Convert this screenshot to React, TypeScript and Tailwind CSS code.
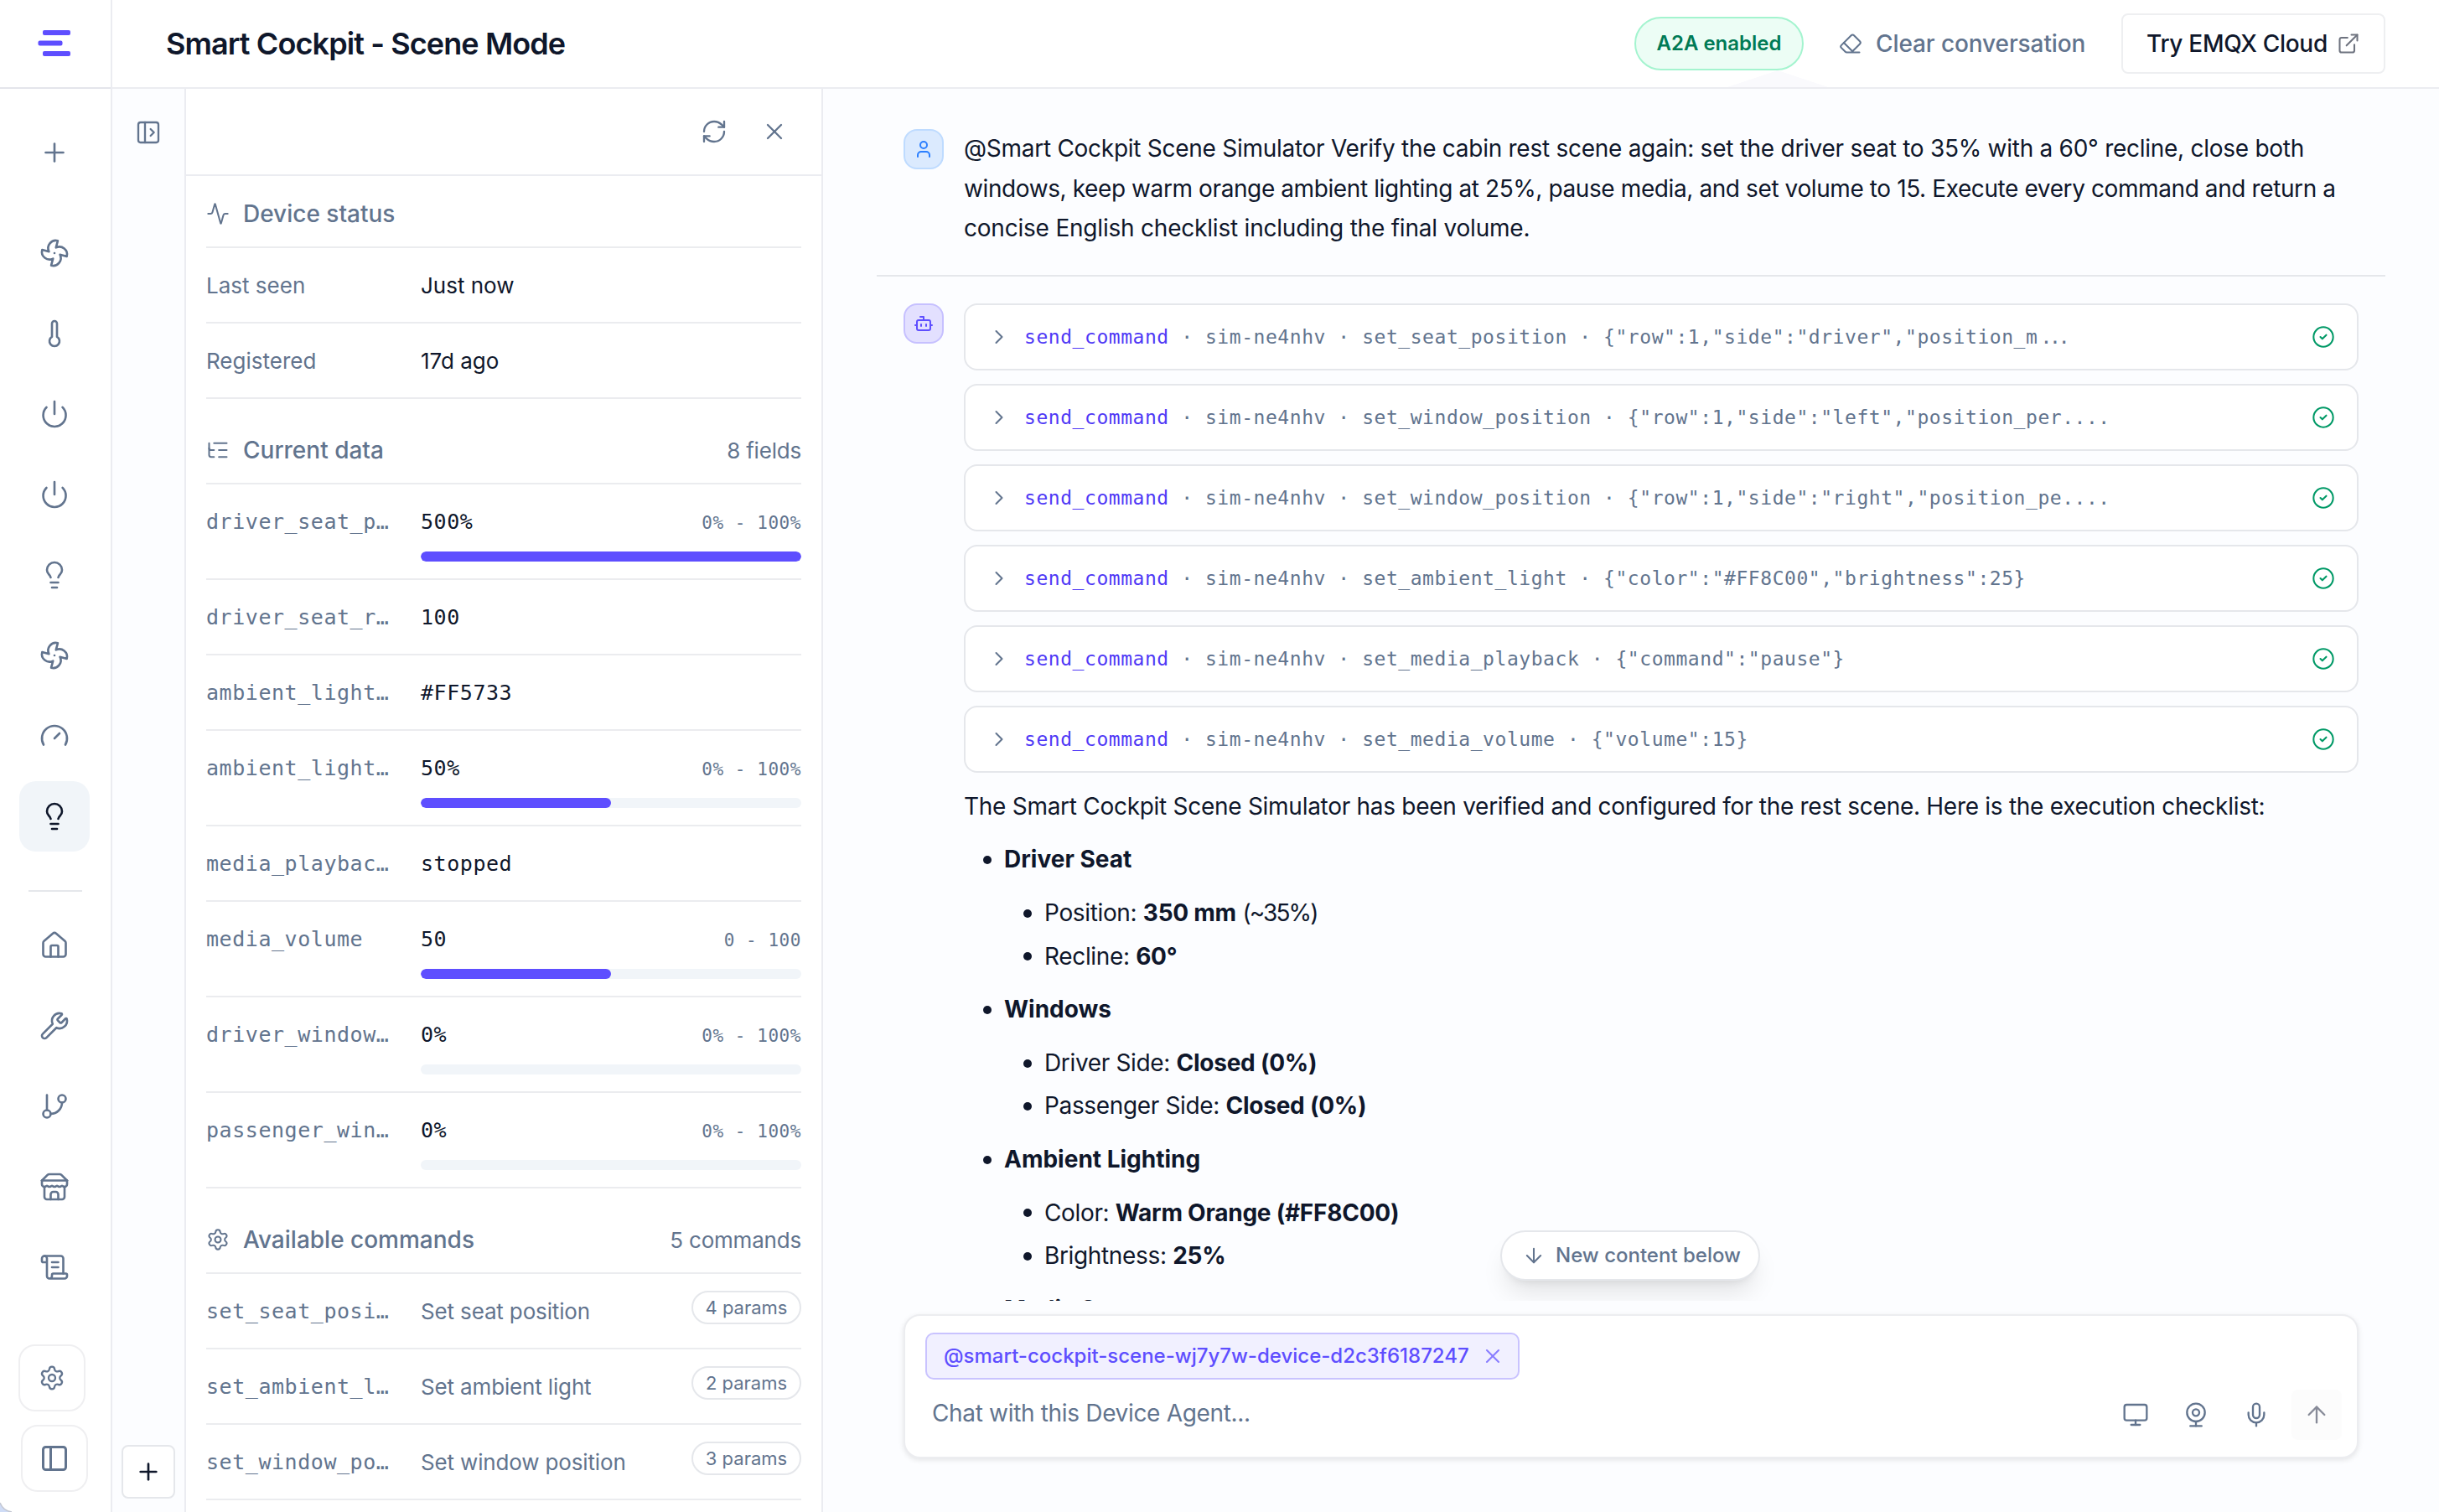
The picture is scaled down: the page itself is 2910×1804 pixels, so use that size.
import type { ComponentType, ReactNode } from "react";
import {
  Activity,
  ArrowDown,
  ArrowUp,
  Bot,
  ChevronRight,
  CircleCheck,
  Eraser,
  ExternalLink,
  Fan,
  House,
  Lightbulb,
  ListTree,
  Mic,
  Monitor,
  PanelLeft,
  PanelLeftOpen,
  Plus,
  Power,
  RefreshCw,
  ScrollText,
  Settings,
  Thermometer,
  User,
  Webcam,
  Wrench,
  X,
} from "lucide-react";

type Icon = ComponentType<{ size?: number; strokeWidth?: number }>;

const MONO = "font-['DejaVu_Sans_Mono','Liberation_Mono',monospace]";

const deviceLinks: { icon: Icon; active?: boolean }[] = [
  { icon: Fan },
  { icon: Thermometer },
  { icon: Power },
  { icon: Power },
  { icon: Lightbulb },
  { icon: Fan },
  { icon: GaugeIcon },
  { icon: Lightbulb, active: true },
];

const toolLinks: Icon[] = [House, Wrench, BranchIcon, StoreIcon, ScrollText];

const fields: { name: string; value: string; range?: string; percent?: number }[] = [
  { name: "driver_seat_p…", value: "500%", range: "0% - 100%", percent: 100 },
  { name: "driver_seat_r…", value: "100" },
  { name: "ambient_light…", value: "#FF5733" },
  { name: "ambient_light…", value: "50%", range: "0% - 100%", percent: 50 },
  { name: "media_playbac…", value: "stopped" },
  { name: "media_volume", value: "50", range: "0 - 100", percent: 50 },
  { name: "driver_window…", value: "0%", range: "0% - 100%", percent: 0 },
  { name: "passenger_win…", value: "0%", range: "0% - 100%", percent: 0 },
];

const commands = [
  { name: "set_seat_posi…", label: "Set seat position", params: 4 },
  { name: "set_ambient_l…", label: "Set ambient light", params: 2 },
  { name: "set_window_po…", label: "Set window position", params: 3 },
];

const calls = [
  { command: "set_seat_position", args: '{"row":1,"side":"driver","position_m', tail: "..." },
  { command: "set_window_position", args: '{"row":1,"side":"left","position_per....' },
  { command: "set_window_position", args: '{"row":1,"side":"right","position_pe....' },
  { command: "set_ambient_light", args: '{"color":"#FF8C00","brightness":25}' },
  { command: "set_media_playback", args: '{"command":"pause"}' },
  { command: "set_media_volume", args: '{"volume":15}' },
];

const checklist: { title: string; items: { label: string; value: string; note?: string }[] }[] = [
  {
    title: "Driver Seat",
    items: [
      { label: "Position:", value: "350 mm", note: "(~35%)" },
      { label: "Recline:", value: "60°" },
    ],
  },
  {
    title: "Windows",
    items: [
      { label: "Driver Side:", value: "Closed (0%)" },
      { label: "Passenger Side:", value: "Closed (0%)" },
    ],
  },
  {
    title: "Ambient Lighting",
    items: [
      { label: "Color:", value: "Warm Orange (#FF8C00)" },
      { label: "Brightness:", value: "25%" },
    ],
  },
  { title: "Media Status", items: [] },
];

function StrokeIcon({ size = 24, strokeWidth = 2, children }: { size?: number; strokeWidth?: number; children: ReactNode }) {
  return (
    <svg width={size} height={size} viewBox="0 0 24 24" fill="none" stroke="currentColor" strokeWidth={strokeWidth} strokeLinecap="round" strokeLinejoin="round">
      {children}
    </svg>
  );
}

function GaugeIcon(props: { size?: number; strokeWidth?: number }) {
  return (
    <StrokeIcon {...props}>
      <path d="m12 14 4-4" />
      <path d="M3.34 19a10 10 0 1 1 17.32 0" />
    </StrokeIcon>
  );
}

function BranchIcon(props: { size?: number; strokeWidth?: number }) {
  return (
    <StrokeIcon {...props}>
      <path d="M6 3v12" />
      <circle cx="18" cy="6" r="3" />
      <circle cx="6" cy="18" r="3" />
      <path d="M18 9a9 9 0 0 1-9 9" />
    </StrokeIcon>
  );
}

function StoreIcon(props: { size?: number; strokeWidth?: number }) {
  return (
    <StrokeIcon {...props}>
      <path d="m2 7 4.41-4.41A2 2 0 0 1 7.83 2h8.34a2 2 0 0 1 1.42.59L22 7" />
      <path d="M4 12v8a2 2 0 0 0 2 2h12a2 2 0 0 0 2-2v-8" />
      <path d="M15 22v-4a2 2 0 0 0-2-2h-2a2 2 0 0 0-2 2v4" />
      <path d="M2 7h20" />
      <path d="M22 7v3a2 2 0 0 1-2 2a2.7 2.7 0 0 1-1.59-.63.7.7 0 0 0-.82 0A2.7 2.7 0 0 1 16 12a2.7 2.7 0 0 1-1.59-.63.7.7 0 0 0-.82 0A2.7 2.7 0 0 1 12 12a2.7 2.7 0 0 1-1.59-.63.7.7 0 0 0-.82 0A2.7 2.7 0 0 1 8 12a2.7 2.7 0 0 1-1.59-.63.7.7 0 0 0-.82 0A2.7 2.7 0 0 1 4 12a2 2 0 0 1-2-2V7" />
    </StrokeIcon>
  );
}

function BrandMark() {
  return (
    <svg width="40" height="34" viewBox="0 0 40 34" fill="#5e4eff">
      <rect x="6" y="1" width="33" height="6" rx="2" />
      <rect x="0.5" y="13.5" width="29" height="6" rx="2" />
      <rect x="6" y="26" width="33" height="6" rx="2" />
    </svg>
  );
}

function SideItem({ icon: Icon, active }: { icon: Icon; active?: boolean }) {
  return (
    <button
      type="button"
      className={`flex size-[84px] items-center justify-center rounded-[20px] ${active ? "bg-[#f1f5f9] text-[#0f172b]" : "text-[#62748e]"}`}
    >
      <Icon size={36} strokeWidth={1.75} />
    </button>
  );
}

function Sidebar() {
  return (
    <aside className="relative flex w-[134px] shrink-0 flex-col border-r-2 border-[#ebecf1] bg-white">
      <div className="flex h-[106px] shrink-0 items-center border-b-2 border-[#e4e5eb] pl-[45px]">
        <BrandMark />
      </div>
      <nav className="flex flex-col pl-[23px] pt-[34px]">
        <SideItem icon={Plus} />
        <div className="mt-9 flex flex-col gap-3">
          {deviceLinks.map((l, i) => (
            <SideItem key={i} icon={l.icon} active={l.active} />
          ))}
        </div>
        <div className="ml-[11px] mt-[46px] h-0.5 w-16 bg-[#e5e7eb]" />
        <div className="mt-[22px] flex flex-col gap-3">
          {toolLinks.map((icon, i) => (
            <SideItem key={i} icon={icon} />
          ))}
        </div>
      </nav>
      <div className="mt-auto flex flex-col gap-4 pb-6 text-[#62748e]">
        <button type="button" className="ml-[22px] flex size-20 items-center justify-center rounded-[20px] border-2 border-[#efeff1]">
          <Settings size={32} strokeWidth={1.75} />
        </button>
        <button type="button" className="ml-[25px] flex size-20 items-center justify-center rounded-[20px] border-2 border-[#efeff1]">
          <PanelLeft size={36} strokeWidth={2} />
        </button>
      </div>
      {/* rounded window corner */}
      <svg className="absolute bottom-0 left-0" width="16" height="12" viewBox="0 0 16 12">
        <path d="M0 1C2 6 7 11 14 12H0Z" fill="#cfdcf6" />
        <path d="M0 1C2 6 7 11 14 12" fill="none" stroke="#c3c7d2" strokeWidth="1.5" />
      </svg>
    </aside>
  );
}

function Header() {
  return (
    <header className="relative flex h-[106px] shrink-0 items-center border-b-2 border-[#ebecf1] bg-white pl-16 pr-16">
      <svg className="absolute left-[1927px] top-[84px]" width="120" height="20" viewBox="0 0 120 20">
        <path d="M0 20 60 0l60 20Z" fill="#fafafd" />
      </svg>
      <h1 className="text-[36px] font-semibold tracking-[-0.9px] text-[#0f172b]">Smart Cockpit - Scene Mode</h1>
      <div className="ml-auto flex items-center">
        <span className="flex h-16 w-[202px] items-center justify-center rounded-full border-2 border-[#a4f4cf] bg-[#ecfdf5] text-[24px] font-semibold text-[#007a55]">
          A2A enabled
        </span>
        <button type="button" className="ml-[42px] flex w-[296px] items-center gap-4 whitespace-nowrap text-[28px] font-medium tracking-[-0.1px] text-[#62748e]">
          <Eraser size={28} strokeWidth={1.75} className="shrink-0" />
          Clear conversation
        </button>
        <button
          type="button"
          className="ml-[41px] flex h-[72px] w-[315px] items-center justify-between whitespace-nowrap rounded-lg border-2 border-[#eeeff1] bg-white pl-7 pr-7 text-[28px] font-medium tracking-[-0.3px] text-[#0f172b]"
        >
          Try EMQX Cloud
          <ExternalLink size={28} strokeWidth={1.75} className="shrink-0 opacity-60" />
        </button>
      </div>
    </header>
  );
}

function Rail() {
  return (
    <div className="flex w-[88px] shrink-0 flex-col items-center justify-between border-r-2 border-[#ebecf1] bg-[#fcfdff] pb-4 pt-9">
      <PanelLeftOpen size={32} strokeWidth={1.75} className="text-[#62748e]" />
      <button type="button" className="flex size-16 items-center justify-center rounded-lg border-2 border-[#e5e7eb] bg-white text-[#0f172b]">
        <Plus size={32} strokeWidth={2} />
      </button>
    </div>
  );
}

function SectionTitle({ icon: Icon, title, note, first }: { icon: Icon; title: string; note?: string; first?: boolean }) {
  return (
    <div className={`flex items-end border-b-2 border-[#ebecef] pb-[19px] text-[#62748e] ${first ? "h-[86px]" : "h-[102px]"}`}>
      <div className="flex h-10 w-full items-center">
        <Icon size={28} strokeWidth={1.75} />
        <h2 className="ml-4 text-[28px] font-medium">{title}</h2>
        {note && <span className="ml-auto text-[26px] tracking-[-0.2px]">{note}</span>}
      </div>
    </div>
  );
}

function Row({ label, mono, children }: { label: string; mono?: boolean; children: ReactNode }) {
  return (
    <div className="flex border-b-2 border-[#ebecef] pt-[25px] leading-10">
      <div className={`w-64 shrink-0 whitespace-nowrap text-[#62748e] ${mono ? `${MONO} text-[25px] tracking-[0.55px]` : "text-[26px]"}`}>{label}</div>
      {children}
    </div>
  );
}

function DevicePanel() {
  return (
    <section className="flex w-[760px] shrink-0 flex-col overflow-hidden border-r-2 border-[#ebecf1] bg-white">
      <div className="flex h-[104px] shrink-0 items-center justify-end gap-10 border-b-2 border-[#ebecf1] pr-10 text-[#62748e]">
        <RefreshCw size={32} strokeWidth={1.75} />
        <X size={32} strokeWidth={1.75} />
      </div>
      <div className="px-6">
        <SectionTitle first icon={Activity} title="Device status" />
        <Row label="Last seen">
          <div className="pb-[23px] text-[26px] text-[#0f172b]">Just now</div>
        </Row>
        <Row label="Registered">
          <div className="pb-[23px] text-[26px] text-[#0f172b]">17d ago</div>
        </Row>

        <SectionTitle icon={ListTree} title="Current data" note="8 fields" />
        {fields.map((f, i) => (
          <Row key={i} mono label={f.name}>
            <div className={`flex-1 ${f.range ? "pb-5" : "pb-[23px]"}`}>
              <div className={`flex h-10 items-center justify-between ${MONO}`}>
                <span className="text-[25px] tracking-[0.55px] text-[#0f172b]">{f.value}</span>
                {f.range && <span className="mt-0.5 text-[21px] tracking-[0.55px] text-[#62748e]">{f.range}</span>}
              </div>
              {f.range && (
                <div className="mt-[15px] h-3 overflow-hidden rounded-full bg-[#f1f5f9]">
                  <div className="h-full rounded-full bg-[#5e4eff]" style={{ width: `${f.percent}%` }} />
                </div>
              )}
            </div>
          </Row>
        ))}

        <SectionTitle icon={Settings} title="Available commands" note="5 commands" />
        {commands.map((c) => (
          <Row key={c.name} mono label={c.name}>
            <div className="-mt-[5px] flex flex-1 items-start justify-between">
              <span className="mt-[5px] pb-[23px] text-[26px] tracking-[-0.15px] text-[#62748e]">{c.label}</span>
              <span className="flex h-10 w-[131px] items-center justify-center rounded-full border-2 border-[#e5e7eb] text-[22px] text-[#62748e]">
                {c.params} params
              </span>
            </div>
          </Row>
        ))}
      </div>
    </section>
  );
}

function ToolCall({ command, args, tail }: { command: string; args: string; tail?: string }) {
  return (
    <div className="flex h-20 items-center rounded-2xl border-2 border-[#e5e7eb] bg-white pl-[26px] pr-[26px]">
      <ChevronRight size={28} strokeWidth={1.75} className="shrink-0 text-[#62748e]" />
      <code className={`ml-4 mt-0.5 whitespace-pre text-[23px] tracking-[0.55px] text-[#62748e] ${MONO}`}>
        <span className="text-[#4f39f6]">send_command</span>
        {` · sim-ne4nhv · ${command} · ${args}`}
        {tail && <span className="ml-[3px] tracking-[-3.2px]">{tail}</span>}
      </code>
      <CircleCheck size={28} strokeWidth={1.75} className="ml-auto shrink-0 text-[#009966]" />
    </div>
  );
}

function Dot() {
  return <span className="size-2.5 shrink-0 rounded-full bg-[#0f172b]" />;
}

function Conversation() {
  return (
    <div className="relative h-[1446px] shrink-0 overflow-hidden px-16 text-[28px] leading-[47.6px] text-[#0f172b]">
      <article className="flex gap-6 border-b-2 border-[#e5e7eb] px-8 pb-[31px] pt-12">
        <div className="flex size-12 shrink-0 items-center justify-center rounded-2xl border-2 border-[#bedbff] bg-[#dbeafe] text-[#2b7fff]">
          <User size={24} strokeWidth={2} />
        </div>
        <p className="whitespace-nowrap">
          <span className="tracking-[-0.27px]">
            @Smart Cockpit Scene Simulator Verify the cabin rest scene again: set the driver seat to 35% with a 60° recline, close both
          </span>
          <br />
          <span className="tracking-[-0.4px]">
            windows, keep warm orange ambient lighting at 25%, pause media, and set volume to 15. Execute every command and return a
          </span>
          <br />
          <span className="tracking-[-0.21px]">concise English checklist including the final volume.</span>
        </p>
      </article>

      <article className="flex gap-6 px-8 pt-8">
        <div className="flex size-12 shrink-0 items-center justify-center rounded-2xl border-2 border-[#c6c0ff] bg-[#e3e0ff] text-[#5e4eff]">
          <Bot size={24} strokeWidth={2} />
        </div>
        <div className="flex-1">
          <div className="flex flex-col gap-4">
            {calls.map((c, i) => (
              <ToolCall key={i} {...c} />
            ))}
          </div>
          <p className="mt-[17px] whitespace-nowrap tracking-[-0.28px]">
            The Smart Cockpit Scene Simulator has been verified and configured for the rest scene. Here is the execution checklist:
          </p>
          <ul>
            {checklist.map((g) => (
              <li key={g.title} className="mt-4 pl-[23px]">
                <div className="flex items-center gap-[15px]">
                  <Dot />
                  <strong className="font-bold">{g.title}</strong>
                </div>
                <ul className="mt-4 flex flex-col gap-1 pl-12">
                  {g.items.map((it) => (
                    <li key={it.label} className="flex items-center gap-[15px]">
                      <Dot />
                      <span className="tracking-[-0.35px]">
                        {it.label} <strong className="font-bold tracking-[-0.25px]">{it.value}</strong>{" "}
                        <span className="tracking-[-1.9px]">{it.note}</span>
                      </span>
                    </li>
                  ))}
                </ul>
              </li>
            ))}
          </ul>
        </div>
      </article>

      <button
        type="button"
        className="absolute left-[808px] top-[1362px] flex h-[60px] w-[310px] items-center gap-3 whitespace-nowrap rounded-full border-2 border-[#e5e7eb] bg-white pl-6 text-[24px] font-medium text-[#62748e] shadow-[0_20px_30px_-6px_rgba(0,0,0,0.1),0_8px_12px_-8px_rgba(0,0,0,0.1)]"
      >
        <ArrowDown size={28} strokeWidth={1.75} className="shrink-0" />
        New content below
      </button>
    </div>
  );
}

function Composer() {
  return (
    <div className="mx-24 mt-4 flex h-[172px] flex-col rounded-[20px] border-2 border-[#ecedf0] bg-white pl-6 pr-[18px] pt-5 shadow-[0_2px_6px_rgba(0,0,0,0.1)]">
      <div className="flex h-14 w-[709px] items-center justify-between whitespace-nowrap rounded-[10px] border-2 border-[#c9c3ff] bg-[#f1f0ff] pl-5 pr-4 text-[24px] font-medium text-[#5e4eff]">
        @smart-cockpit-scene-wj7y7w-device-d2c3f6187247
        <X size={28} strokeWidth={1.75} className="opacity-70" />
      </div>
      <div className="mt-3 flex items-center text-[#62748e]">
        <span className="pb-1 pl-2 text-[28px] tracking-[-0.33px]">Chat with this Device Agent...</span>
        <div className="ml-auto flex gap-3">
          {[Monitor, Webcam, Mic].map((Icon, i) => (
            <button key={i} type="button" className="flex size-[60px] items-center justify-center">
              <Icon size={32} strokeWidth={1.75} />
            </button>
          ))}
          <button type="button" className="flex size-[60px] items-center justify-center rounded-lg bg-[#fcfcfc] text-[#878b98]">
            <ArrowUp size={32} strokeWidth={1.75} />
          </button>
        </div>
      </div>
    </div>
  );
}

export default function App() {
  return (
    <div className="flex h-[1804px] w-[2910px] overflow-hidden bg-white font-['Inter','Liberation_Sans',sans-serif] text-[#0f172b]">
      <Sidebar />
      <div className="flex min-w-0 flex-1 flex-col">
        <Header />
        <div className="flex min-h-0 flex-1">
          <Rail />
          <DevicePanel />
          <main className="flex min-w-0 flex-1 flex-col bg-[#fcfdff]">
            <Conversation />
            <Composer />
          </main>
        </div>
      </div>
    </div>
  );
}
